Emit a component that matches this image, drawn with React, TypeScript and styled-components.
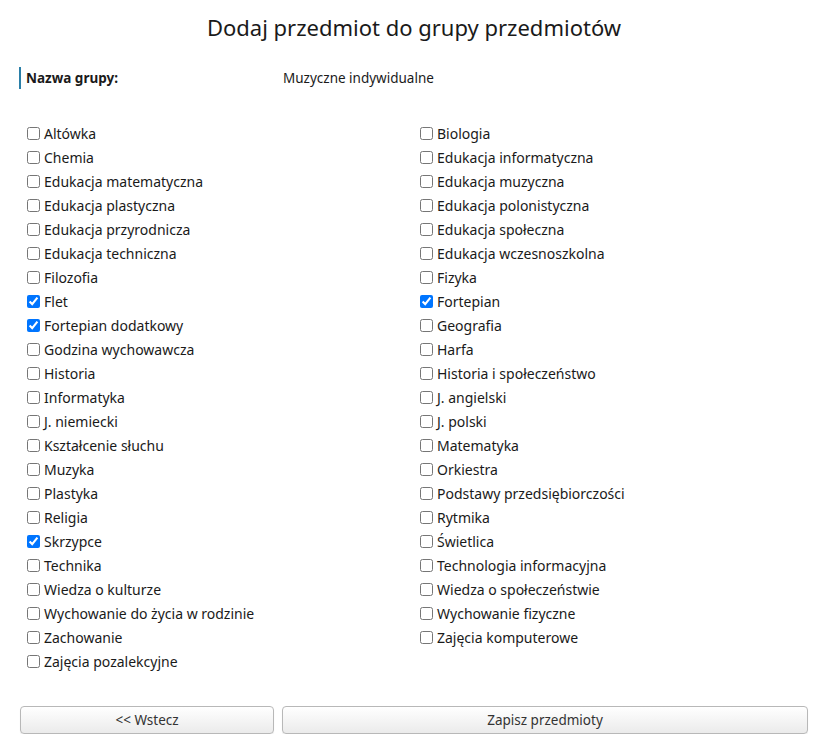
import { createGlobalStyle, styled } from "styled-components";

const GlobalStyle = createGlobalStyle`
  body {
    margin: 0;
    background: #fff;
    font-family: "Noto Sans", "Open Sans", sans-serif;
    color: #1a1a1a;
  }
`;

const leftSubjects: [string, boolean][] = [
  ["Altówka", false],
  ["Chemia", false],
  ["Edukacja matematyczna", false],
  ["Edukacja plastyczna", false],
  ["Edukacja przyrodnicza", false],
  ["Edukacja techniczna", false],
  ["Filozofia", false],
  ["Flet", true],
  ["Fortepian dodatkowy", true],
  ["Godzina wychowawcza", false],
  ["Historia", false],
  ["Informatyka", false],
  ["J. niemiecki", false],
  ["Kształcenie słuchu", false],
  ["Muzyka", false],
  ["Plastyka", false],
  ["Religia", false],
  ["Skrzypce", true],
  ["Technika", false],
  ["Wiedza o kulturze", false],
  ["Wychowanie do życia w rodzinie", false],
  ["Zachowanie", false],
  ["Zajęcia pozalekcyjne", false],
];

const rightSubjects: [string, boolean][] = [
  ["Biologia", false],
  ["Edukacja informatyczna", false],
  ["Edukacja muzyczna", false],
  ["Edukacja polonistyczna", false],
  ["Edukacja społeczna", false],
  ["Edukacja wczesnoszkolna", false],
  ["Fizyka", false],
  ["Fortepian", true],
  ["Geografia", false],
  ["Harfa", false],
  ["Historia i społeczeństwo", false],
  ["J. angielski", false],
  ["J. polski", false],
  ["Matematyka", false],
  ["Orkiestra", false],
  ["Podstawy przedsiębiorczości", false],
  ["Rytmika", false],
  ["Świetlica", false],
  ["Technologia informacyjna", false],
  ["Wiedza o społeczeństwie", false],
  ["Wychowanie fizyczne", false],
  ["Zajęcia komputerowe", false],
];

const Page = styled.div`
  padding: 0 18px 0 20px;
`;

const Title = styled.h1`
  margin: 0;
  padding-top: 12px;
  height: 32px;
  text-align: center;
  font-size: 22px;
  font-weight: 400;
  line-height: 30px;
`;

const InfoRow = styled.div`
  display: grid;
  grid-template-columns: 262px 1fr;
  align-items: center;
  margin-top: 23px;
  height: 22px;
  border-left: 2px solid #2a7fa8;
  margin-left: -1px;
  font-size: 13.5px;
`;

const Label = styled.div`
  font-weight: 700;
  padding-left: 5px;
`;

const Value = styled.div``;

const Columns = styled.div`
  display: grid;
  grid-template-columns: 1fr 1fr;
  margin-top: 32px;
`;

const List = styled.div<{ $offset: number }>`
  display: flex;
  flex-direction: column;
  padding-left: ${(p) => p.$offset}px;
`;

const Item = styled.label`
  display: flex;
  align-items: center;
  gap: 4px;
  height: 24px;
  font-size: 14px;
  cursor: pointer;

  & input {
    margin: 0;
    width: 13px;
    height: 13px;
  }
`;

const Buttons = styled.div`
  display: grid;
  grid-template-columns: 254px 1fr;
  gap: 8px;
  margin-top: 33px;
`;

const Button = styled.button`
  height: 28px;
  border: 1px solid #b8b8b8;
  border-radius: 4px;
  background: linear-gradient(#ffffff, #ebebeb);
  font-family: inherit;
  font-size: 13.5px;
  color: #333;
  box-shadow: 0 1px 1px rgba(0, 0, 0, 0.08);
`;

const SubjectList = ({
  items,
  offset,
}: {
  items: [string, boolean][];
  offset: number;
}) => (
  <List $offset={offset}>
    {items.map(([name, checked]) => (
      <Item key={name}>
        <input type="checkbox" defaultChecked={checked} />
        {name}
      </Item>
    ))}
  </List>
);

export default function App() {
  return (
    <Page>
      <GlobalStyle />
      <Title>Dodaj przedmiot do grupy przedmiotów</Title>
      <InfoRow>
        <Label>Nazwa grupy:</Label>
        <Value>Muzyczne indywidualne</Value>
      </InfoRow>
      <Columns>
        <SubjectList items={leftSubjects} offset={7} />
        <SubjectList items={rightSubjects} offset={6} />
      </Columns>
      <Buttons>
        <Button>&lt;&lt; Wstecz</Button>
        <Button>Zapisz przedmioty</Button>
      </Buttons>
    </Page>
  );
}
